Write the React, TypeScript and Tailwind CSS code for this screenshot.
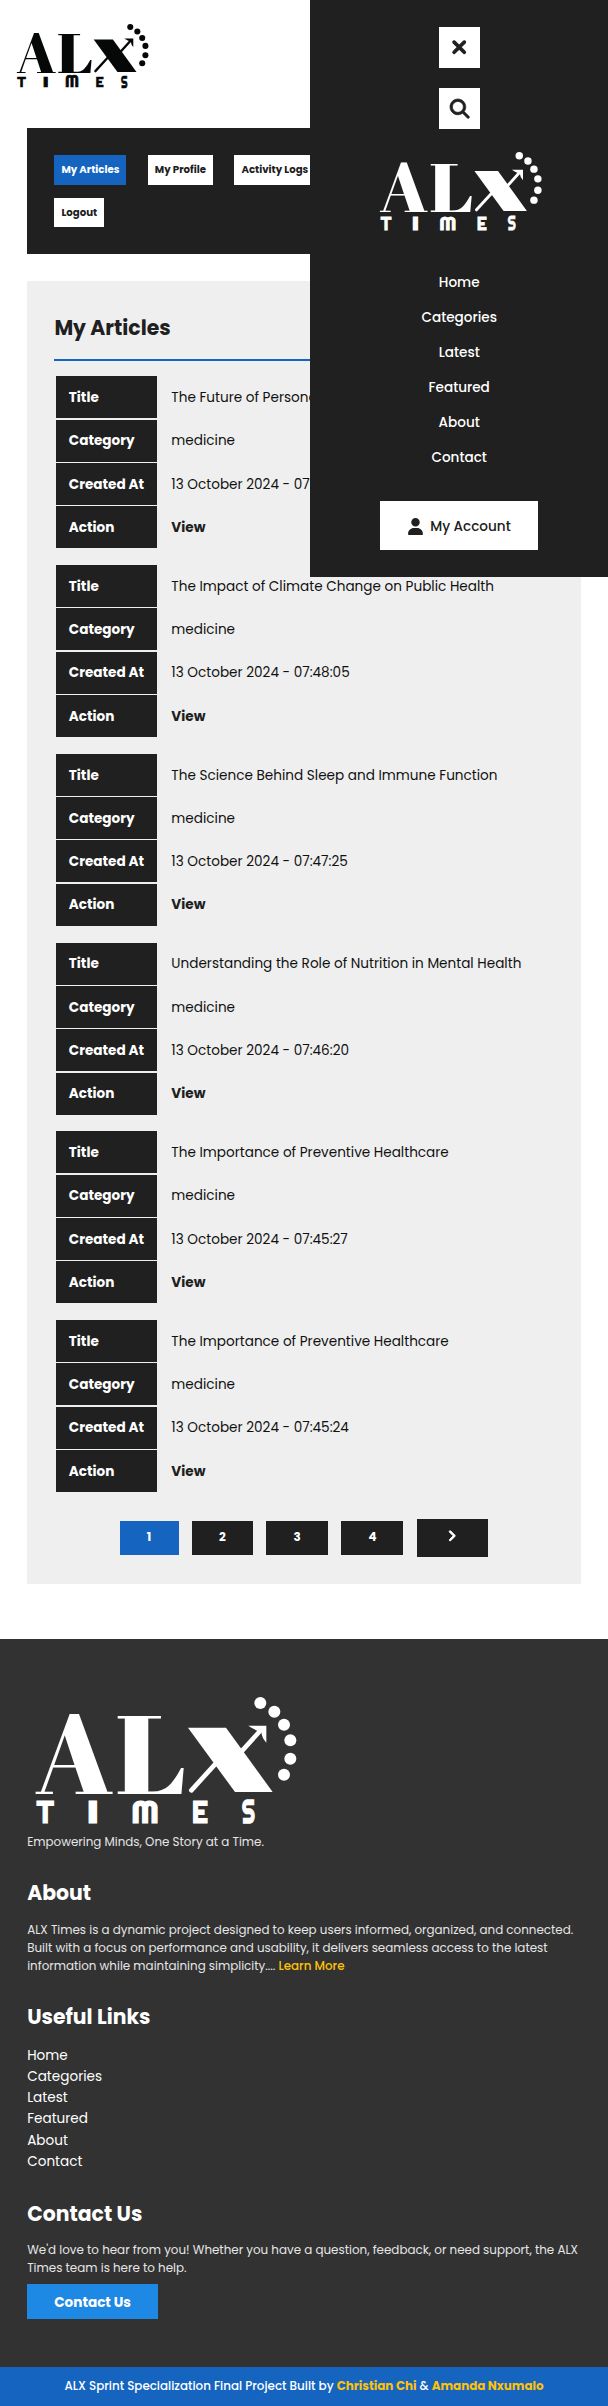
import React from "react";
import { FaAngleRight, FaMagnifyingGlass, FaUser, FaXmark } from "react-icons/fa6";

function Logo({ className }: { className: string }) {
  const large: [string, string][] = [
    ["A", "translate(105 404) scale(3.38 3.37)"],
    ["L", "translate(345.8 404) scale(3.6 3.31)"],
  ];
  const small: [string, string][] = [
    ["T", "translate(110 489) scale(0.88 0.91)"],
    ["I", "translate(259.6 489) scale(1.4 0.91)"],
    ["M", "translate(393.9 489) scale(1.01 0.92)"],
    ["E", "translate(575 489) scale(0.84 0.91)"],
    ["S", "translate(725.7 490) scale(0.63 0.96)"],
  ];
  const dots: [number, number][] = [
    [781, 130],
    [823, 156],
    [852, 195],
    [871, 242],
    [871, 297],
    [852, 345],
  ];
  return (
    <svg viewBox="105 112 783 380" className={className} fill="currentColor" overflow="visible">
      <g fontFamily="'Abril Fatface', 'Liberation Serif', serif" fontSize="100">
        {large.map(([ch, t]) => (
          <text key={ch} transform={t}>{ch}</text>
        ))}
      </g>
      <polygon points="564,204 678,204 818,397 705,397" />
      <path d="M574 392 L645 314 M722 278 L780 214" fill="none" stroke="currentColor" strokeWidth="14" strokeLinecap="round" />
      <path d="M745 198 H799 V249 Q786 236 784 218 Q762 210 745 198 Z" />
      {dots.map(([x, y]) => (
        <circle key={y} cx={x} cy={y} r="18" />
      ))}
      <g fontFamily="Righteous, Poppins, sans-serif" fontSize="100" stroke="currentColor" strokeWidth="4">
        {small.map(([ch, t]) => (
          <text key={ch} transform={t}>{ch}</text>
        ))}
      </g>
    </svg>
  );
}

const links = ["Home", "Categories", "Latest", "Featured", "About", "Contact"];

const articles = [
  ["The Future of Personalized Medicine", "07:48:34"],
  ["The Impact of Climate Change on Public Health", "07:48:05"],
  ["The Science Behind Sleep and Immune Function", "07:47:25"],
  ["Understanding the Role of Nutrition in Mental Health", "07:46:20"],
  ["The Importance of Preventive Healthcare", "07:45:27"],
  ["The Importance of Preventive Healthcare", "07:45:24"],
];

function Row({ label, children }: { label: string; children: React.ReactNode }) {
  return (
    <div className="flex h-[42px] items-center">
      <div className="flex h-full w-[101.3px] items-center bg-[#202020] pt-[1.8px] pl-[12.75px] font-bold text-white">{label}</div>
      <div className="pt-[1.8px] pl-[14px] text-[#111]">{children}</div>
    </div>
  );
}

function Tab({ label, active }: { label: string; active?: boolean }) {
  return (
    <button
      className={
        "h-[29.4px] px-[7px] text-[10.2px] font-bold whitespace-nowrap " +
        (active ? "bg-[#1565c0] text-white" : "bg-white text-[#202020]")
      }
    >
      {label}
    </button>
  );
}

function Menu() {
  return (
    <aside className="absolute top-0 right-0 flex h-[577px] w-[297.6px] flex-col items-center bg-[#202020] pt-[27.2px] text-[13.6px] font-medium text-white">
      <button className="flex h-[41px] w-[41px] shrink-0 items-center justify-center bg-white text-[#202020]">
        <FaXmark className="size-[20.4px] overflow-visible" stroke="currentColor" strokeWidth={28} />
      </button>
      <button className="mt-[20.2px] flex h-[41px] w-[41px] shrink-0 items-center justify-center bg-white text-[#202020]">
        <FaMagnifyingGlass className="size-[19.4px] overflow-visible" stroke="currentColor" strokeWidth={18} />
      </button>
      <Logo className="mt-[22.6px] ml-[2.4px] h-[78.5px] w-[163px] shrink-0" />
      <nav className="mt-[35px] flex flex-col items-center">
        {links.map((l) => (
          <a key={l} className="flex h-[35px] items-center">{l}</a>
        ))}
      </nav>
      <button className="mt-[26px] flex h-[48.5px] w-[158px] shrink-0 items-center justify-center gap-[7.5px] bg-white text-[#202020]">
        <FaUser className="mt-px h-[17px] w-[15px]" />
        <span className="pt-[2px]">My Account</span>
      </button>
    </aside>
  );
}

export default function App() {
  return (
    <div className="relative flex h-[2406px] w-full flex-col overflow-hidden bg-white font-['Poppins',sans-serif] text-[13.6px]">
      <header className="h-[128.3px] shrink-0 pt-[24px] pl-[16.4px] text-[#050807]">
        <Logo className="h-[64px] w-[132.7px]" />
      </header>

      <section className="mx-[27.2px] flex h-[126px] shrink-0 flex-col gap-[13.4px] bg-[#202020] pt-[27px] pl-[27.2px]">
        <div className="flex gap-[21.4px]">
          <Tab label="My Articles" active />
          <Tab label="My Profile" />
          <Tab label="Activity Logs" />
        </div>
        <div className="flex">
          <Tab label="Logout" />
        </div>
      </section>

      <main className="mx-[27.2px] mt-[26.9px] flex h-[1303.2px] shrink-0 flex-col bg-[#efefef] px-[27.2px] pt-[27.2px]">
        <h1 className="flex h-[53px] items-start border-b-2 border-[#1565c0] pt-[5px] text-[20.4px] leading-[30.6px] font-bold text-[#202020]">My Articles</h1>
        <div className="mt-[14.9px] flex flex-col gap-[16.9px] pl-[1.7px]">
          {articles.map(([title, time]) => (
            <article key={time} className="flex flex-col gap-[1.3px]">
              <Row label="Title">{title}</Row>
              <Row label="Category">medicine</Row>
              <Row label="Created At">13 October 2024 - {time}</Row>
              <Row label="Action">
                <b className="font-bold text-[#202020]">View</b>
              </Row>
            </article>
          ))}
        </div>
        <div className="mt-[26.5px] flex items-center justify-center gap-[13.6px] text-[11.9px] font-bold text-white">
          <button className="h-[33.6px] w-[59px] bg-[#1565c0]">1</button>
          <button className="h-[33.6px] w-[60.6px] bg-[#202020]">2</button>
          <button className="h-[33.6px] w-[61.6px] bg-[#202020]">3</button>
          <button className="h-[33.6px] w-[62px] bg-[#202020]">4</button>
          <button className="flex h-[38.4px] w-[71.4px] items-center justify-center bg-[#202020]">
            <FaAngleRight className="mr-px mb-[3px] size-[13.6px] overflow-visible" stroke="currentColor" strokeWidth={36} />
          </button>
        </div>
      </main>

      <footer className="mt-[54.4px] flex h-[728.5px] shrink-0 flex-col bg-[#323232] px-[27.2px] pt-[58.5px] text-[11.9px] leading-[18px] text-[#e6e6e6]">
        <Logo className="ml-[7.8px] h-[126.7px] w-[261px] shrink-0 text-white" />
        <p className="mt-[9.2px]">Empowering Minds, One Story at a Time.</p>
        <h2 className="mt-[27px] text-[20.4px] leading-[30.6px] font-bold text-white">About</h2>
        <p className="mt-[12.2px]">
          ALX Times is a dynamic project designed to keep users informed, organized, and connected. Built with a focus
          on performance and usability, it delivers seamless access to the latest information while maintaining
          simplicity.... <a className="font-medium text-[#ffc107]">Learn More</a>
        </p>
        <h2 className="mt-[26.7px] text-[20.4px] leading-[30.6px] font-bold text-white">Useful Links</h2>
        <ul className="mt-[13px] text-[13.6px] leading-[21.1px] text-white">
          {links.map((l) => (
            <li key={l}>{l}</li>
          ))}
        </ul>
        <h2 className="mt-[27.2px] text-[20.4px] leading-[30.6px] font-bold text-white">Contact Us</h2>
        <p className="mt-[11.9px]">
          We'd love to hear from you! Whether you have a question, feedback, or need support, the ALX Times team is
          here to help.
        </p>
        <button className="mt-[6.3px] h-[35.7px] w-[130.8px] shrink-0 bg-[#1e88e5] pt-[2px] text-[13.6px] font-bold text-white">Contact Us</button>
      </footer>
      <div className="flex h-[39px] shrink-0 items-center justify-center bg-[#1565c0] pt-px text-[11.9px] font-medium text-white">
        <p>
          ALX Sprint Specialization Final Project Built by <b className="font-bold text-[#ffc107]">Christian Chi</b> &amp;{" "}
          <b className="font-bold text-[#ffc107]">Amanda Nxumalo</b>
        </p>
      </div>
      <Menu />
    </div>
  );
}
